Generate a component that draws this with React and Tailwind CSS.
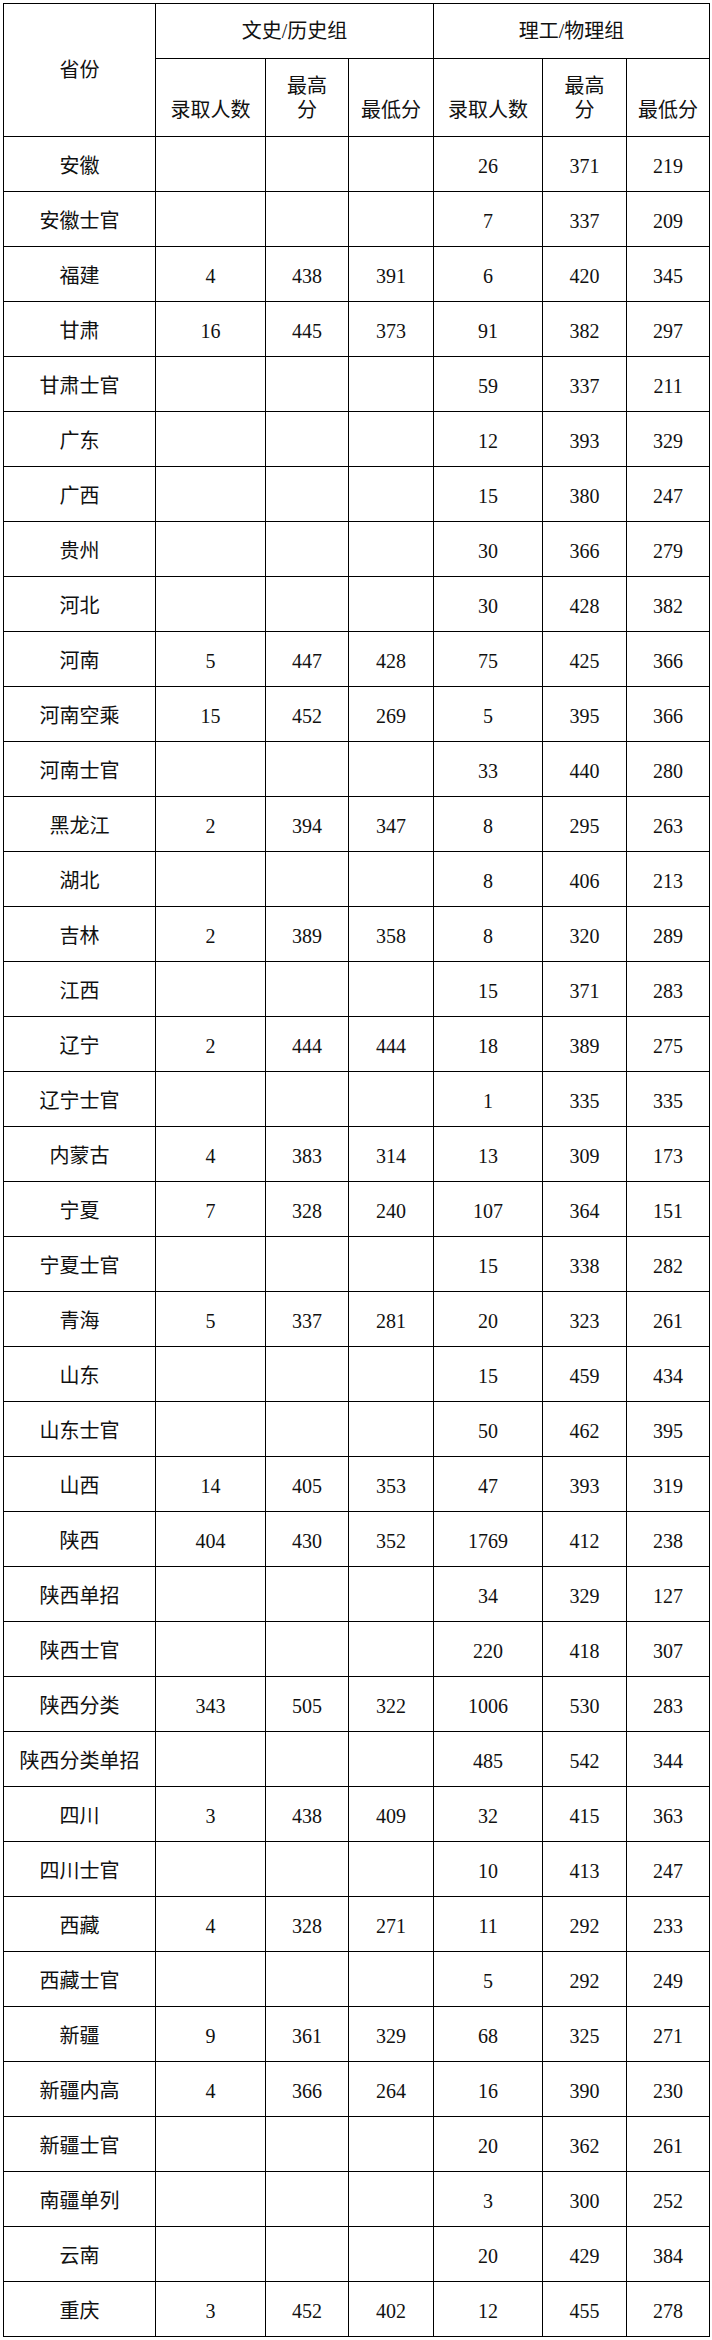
const ROWS = [
  ["安徽", "", "", "", "26", "371", "219"],
  ["安徽士官", "", "", "", "7", "337", "209"],
  ["福建", "4", "438", "391", "6", "420", "345"],
  ["甘肃", "16", "445", "373", "91", "382", "297"],
  ["甘肃士官", "", "", "", "59", "337", "211"],
  ["广东", "", "", "", "12", "393", "329"],
  ["广西", "", "", "", "15", "380", "247"],
  ["贵州", "", "", "", "30", "366", "279"],
  ["河北", "", "", "", "30", "428", "382"],
  ["河南", "5", "447", "428", "75", "425", "366"],
  ["河南空乘", "15", "452", "269", "5", "395", "366"],
  ["河南士官", "", "", "", "33", "440", "280"],
  ["黑龙江", "2", "394", "347", "8", "295", "263"],
  ["湖北", "", "", "", "8", "406", "213"],
  ["吉林", "2", "389", "358", "8", "320", "289"],
  ["江西", "", "", "", "15", "371", "283"],
  ["辽宁", "2", "444", "444", "18", "389", "275"],
  ["辽宁士官", "", "", "", "1", "335", "335"],
  ["内蒙古", "4", "383", "314", "13", "309", "173"],
  ["宁夏", "7", "328", "240", "107", "364", "151"],
  ["宁夏士官", "", "", "", "15", "338", "282"],
  ["青海", "5", "337", "281", "20", "323", "261"],
  ["山东", "", "", "", "15", "459", "434"],
  ["山东士官", "", "", "", "50", "462", "395"],
  ["山西", "14", "405", "353", "47", "393", "319"],
  ["陕西", "404", "430", "352", "1769", "412", "238"],
  ["陕西单招", "", "", "", "34", "329", "127"],
  ["陕西士官", "", "", "", "220", "418", "307"],
  ["陕西分类", "343", "505", "322", "1006", "530", "283"],
  ["陕西分类单招", "", "", "", "485", "542", "344"],
  ["四川", "3", "438", "409", "32", "415", "363"],
  ["四川士官", "", "", "", "10", "413", "247"],
  ["西藏", "4", "328", "271", "11", "292", "233"],
  ["西藏士官", "", "", "", "5", "292", "249"],
  ["新疆", "9", "361", "329", "68", "325", "271"],
  ["新疆内高", "4", "366", "264", "16", "390", "230"],
  ["新疆士官", "", "", "", "20", "362", "261"],
  ["南疆单列", "", "", "", "3", "300", "252"],
  ["云南", "", "", "", "20", "429", "384"],
  ["重庆", "3", "452", "402", "12", "455", "278"],
];

const cell = "border border-black text-center p-0";

function SubHead() {
  return (
    <>
      <th className={`${cell} align-bottom pb-[14px] font-normal`}>录取人数</th>
      <th className={`${cell} align-bottom pb-[14px] font-normal leading-[24px]`}>
        最高
        <br />分
      </th>
      <th className={`${cell} align-bottom pb-[14px] font-normal`}>最低分</th>
    </>
  );
}

export default function App() {
  return (
    <div className="min-h-screen bg-white pl-[3px] pt-[3px]">
      <table
        className="w-[706px] table-fixed border-collapse text-[20px] leading-[24px] text-[#111]"
        style={{ fontFamily: '"Liberation Serif", "Noto Sans CJK SC", serif' }}
      >
        <colgroup>
          <col className="w-[152px]" />
          <col className="w-[110px]" />
          <col className="w-[83px]" />
          <col className="w-[85px]" />
          <col className="w-[109px]" />
          <col className="w-[84px]" />
          <col className="w-[83px]" />
        </colgroup>
        <thead>
          <tr className="h-[55px]">
            <th rowSpan={2} className={`${cell} font-normal`}>
              省份
            </th>
            <th colSpan={3} className={`${cell} font-normal`}>
              文史/历史组
            </th>
            <th colSpan={3} className={`${cell} font-normal`}>
              理工/物理组
            </th>
          </tr>
          <tr className="h-[78px]">
            <SubHead />
            <SubHead />
          </tr>
        </thead>
        <tbody>
          {ROWS.map((r) => (
            <tr key={r[0]} className="h-[55px]">
              {r.map((v, i) => (
                <td key={i} className={`${cell} pt-[4px]`}>
                  {v}
                </td>
              ))}
            </tr>
          ))}
        </tbody>
      </table>
    </div>
  );
}
